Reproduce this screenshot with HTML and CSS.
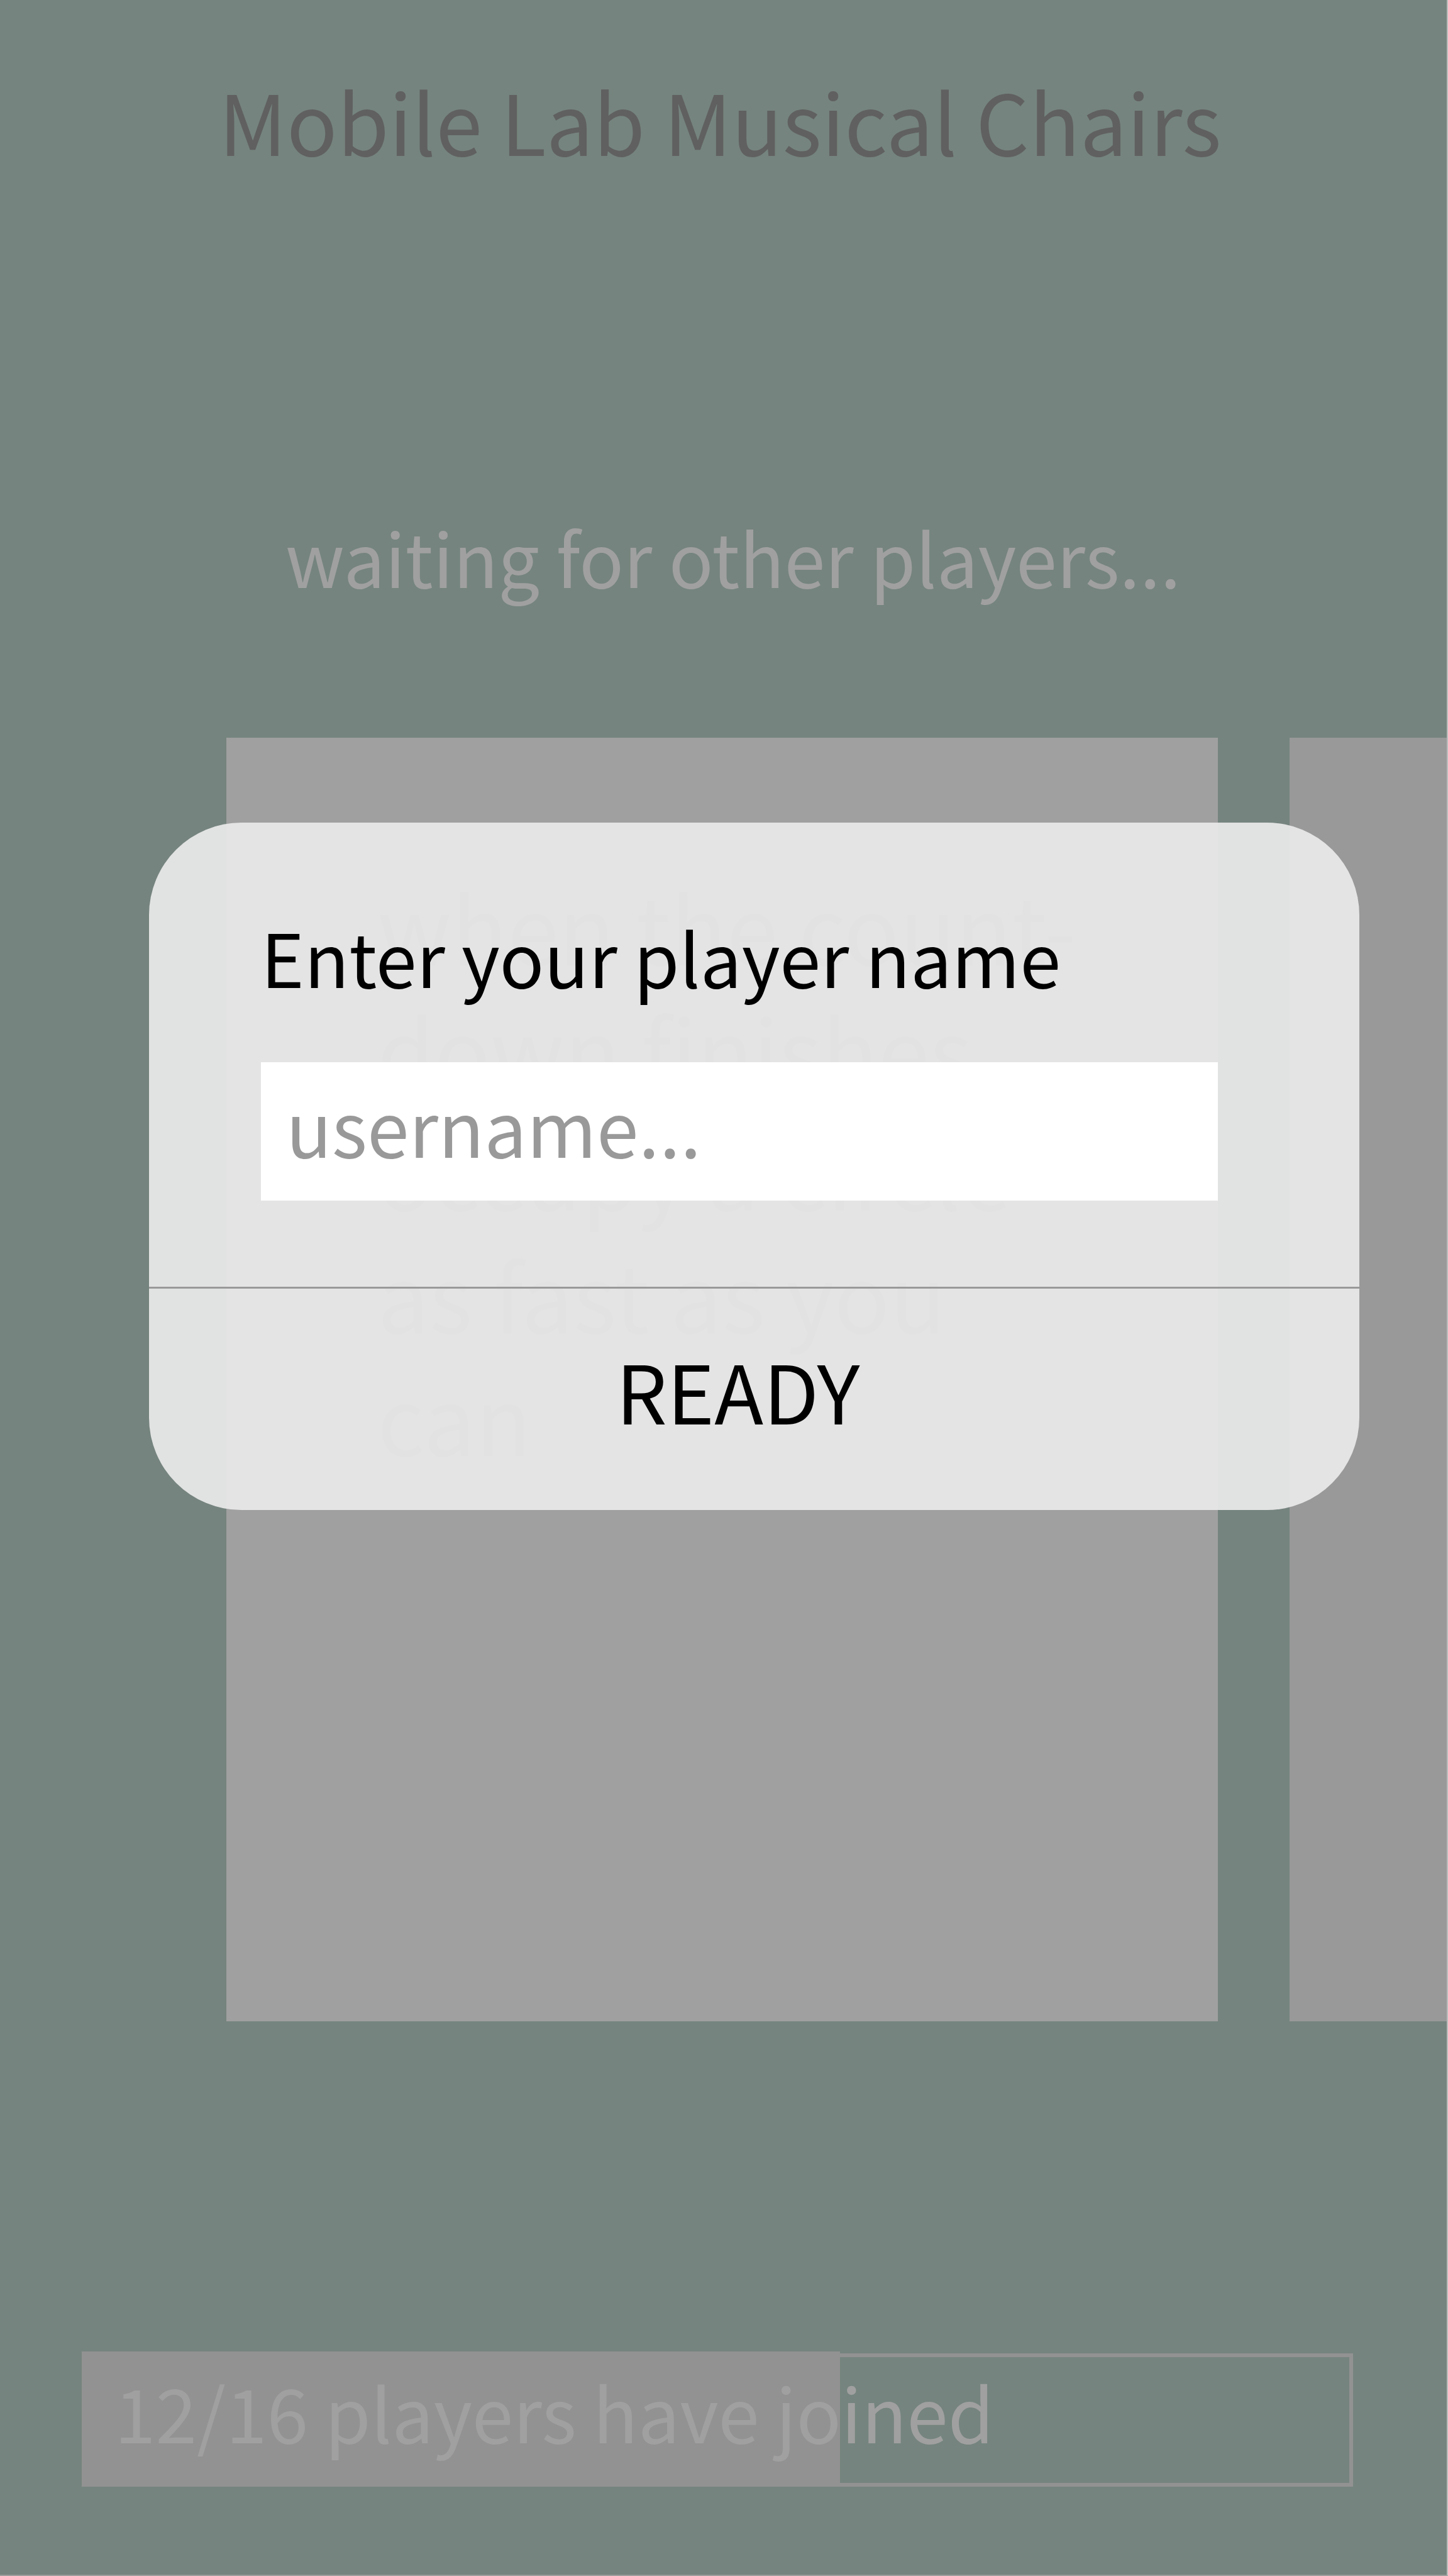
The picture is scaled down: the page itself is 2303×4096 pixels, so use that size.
FILE: index.html
```html
<!DOCTYPE html>
<html lang="en">
<head>
<meta charset="utf-8">
<meta name="viewport" content="width=device-width, initial-scale=1">
<title>Mobile Lab Musical Chairs</title>
<link rel="stylesheet" href="styles.css">
</head>
<body>
<main class="screen">
  <h1 class="title">Mobile Lab Musical Chairs</h1>
  <p class="status">waiting for other players...</p>

  <div class="cards">
    <article class="card">
      <p class="card-text">when the count-<br>down finishes<br>occupy a circle<br>as fast as you<br>can</p>
    </article>
    <article class="card card-next"></article>
  </div>

  <div class="progress" role="progressbar" aria-label="Players joined" aria-valuemin="0" aria-valuemax="16" aria-valuenow="12">
    <div class="progress-fill"></div>
    <span class="progress-label">12/16 players have joined</span>
  </div>

  <form class="modal" role="dialog" aria-labelledby="name-label">
    <div class="modal-body">
      <label class="modal-label" id="name-label" for="username">Enter your player name</label>
      <input class="modal-input" id="username" type="text" placeholder="username...">
    </div>
    <button class="modal-button" type="button">READY</button>
  </form>
</main>
</body>
</html>
```
FILE: styles.css
```css
* {
  box-sizing: border-box;
}

body {
  margin: 0;
  background: #75847e;
  font-family: "Noto Sans CJK SC", "Noto Sans", sans-serif;
}

.screen {
  position: relative;
  display: flex;
  flex-direction: column;
  min-height: 100vh;
  padding: 110px 0 140px;
  overflow: hidden;
  border-right: 2px solid #bdbdbd;
  border-bottom: 2px solid #9e9e9e;
}

.title {
  margin: 0;
  padding-left: 348px;
  color: #606060;
  font-size: 133px;
  font-weight: 400;
  line-height: 160px;
}

.status {
  margin: 544px 0 0;
  padding-left: 454px;
  color: #a0a0a0;
  font-size: 117px;
  line-height: 140px;
}

.cards {
  display: flex;
  gap: 114px;
  margin-top: 219px;
  padding-left: 360px;
}

.card {
  flex: 1;
  min-height: 2041px;
  padding: 200px 0 0 240px;
  background: #a0a0a0;
}

.card-next {
  flex: 0 0 250px;
  padding: 0;
  background: #999999;
}

.card-text {
  margin: 0;
  color: #828282;
  font-size: 147px;
  line-height: 195px;
}

.progress {
  position: relative;
  height: 212px;
  margin: auto 149px 0 130px;
  padding-left: 46px;
  border: 6px solid #929292;
}

.progress-fill {
  position: absolute;
  top: -9px;
  bottom: -6px;
  left: -6px;
  width: 60%;
  background: #929292;
}

.progress-label {
  position: relative;
  display: block;
  color: #a0a0a0;
  font-size: 118px;
  line-height: 172px;
}

.modal {
  position: absolute;
  top: 1308px;
  right: 139px;
  left: 237px;
  overflow: hidden;
  border-radius: 147px;
  background: rgba(233, 233, 233, 0.93);
}

.modal-body {
  display: flex;
  flex-direction: column;
  gap: 99px;
  padding: 142px 225px 137px 178px;
  border-bottom: 3px solid #999999;
}

.modal-label {
  color: #000000;
  font-size: 117px;
  line-height: 140px;
}

.modal-input {
  width: 100%;
  height: 220px;
  padding: 0 40px 20px;
  border: 0;
  border-radius: 0;
  background: #ffffff;
  color: #000000;
  font-family: inherit;
  font-size: 120px;
}

.modal-input::placeholder {
  color: #999999;
  opacity: 1;
}

.modal-button {
  display: block;
  width: 100%;
  height: 352px;
  padding: 0 52px 32px 0;
  border: 0;
  background: transparent;
  color: #000000;
  font-family: inherit;
  font-size: 128px;
}
```
